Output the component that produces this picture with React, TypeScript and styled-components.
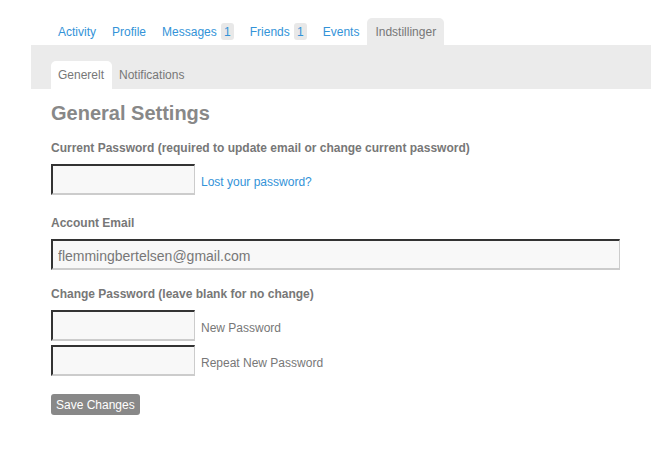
import { createGlobalStyle } from "styled-components";
import styled from "styled-components";

const GlobalStyle = createGlobalStyle`
  html, body {
    margin: 0;
    padding: 0;
    background: #fff;
    font-family: "Liberation Sans", Arial, sans-serif;
  }
`;

const Page = styled.div`
  width: 651px;
  height: 471px;
  padding-top: 18px;
  padding-left: 31px;
  box-sizing: border-box;
`;

const MainNav = styled.ul`
  display: flex;
  list-style: none;
  margin: 0;
  padding: 0 0 0 19px;
  height: 27px;
  align-items: stretch;
`;

const MainTab = styled.li<{ $active?: boolean }>`
  display: flex;
  align-items: center;
  padding: 0 8px;
  font-size: 12px;
  color: ${(p) => (p.$active ? "#777" : "#3393d8")};
  background: ${(p) => (p.$active ? "#ebebeb" : "transparent")};
  border-radius: 5px 5px 0 0;
`;

const Count = styled.span`
  display: inline-flex;
  align-items: center;
  justify-content: center;
  margin-left: 4px;
  width: 13px;
  height: 17px;
  font-size: 12px;
  background: #e8e8e8;
  color: #3393d8;
  border-radius: 3px;
`;

const SubBand = styled.div`
  background: #ebebeb;
  height: 44px;
  display: flex;
  align-items: flex-end;
  padding-left: 20px;
`;

const SubTab = styled.div<{ $active?: boolean }>`
  height: 28px;
  display: flex;
  align-items: center;
  padding: 0 8px 0 7px;
  font-size: 12px;
  color: #777;
  background: ${(p) => (p.$active ? "#fff" : "transparent")};
  border-radius: 5px 5px 0 0;
`;

const Content = styled.div`
  padding-left: 20px;
`;

const Heading = styled.h2`
  margin: 12px 0 0;
  font-size: 20px;
  line-height: 24px;
  font-weight: bold;
  color: #888;
`;

const Label = styled.div<{ $top: number }>`
  margin-top: ${(p) => p.$top}px;
  font-size: 12px;
  line-height: 14px;
  font-weight: bold;
  color: #777;
`;

const Row = styled.div<{ $top: number }>`
  display: flex;
  align-items: center;
  margin-top: ${(p) => p.$top}px;
`;

const Field = styled.input<{ $wide?: boolean }>`
  box-sizing: border-box;
  width: ${(p) => (p.$wide ? "569px" : "144px")};
  height: 31px;
  margin: 0;
  padding: 2px 0 0 5px;
  background: #f8f8f8;
  border-style: solid;
  border-width: 2px 1px 2px 2px;
  border-color: #333 #ccc #ccc #333;
  font-family: "Liberation Sans", Arial, sans-serif;
  font-size: 14px;
  color: #777;
  outline: none;
`;

const SideLink = styled.a`
  margin-left: 6px;
  font-size: 12px;
  color: #3393d8;
  text-decoration: none;
  padding-top: 4px;
`;

const SideText = styled.span`
  margin-left: 6px;
  font-size: 12px;
  color: #777;
  padding-top: 4px;
`;

const SaveButton = styled.button`
  margin-top: 18px;
  height: 21px;
  padding: 0 5px;
  border: none;
  border-radius: 3px;
  background: #888;
  color: #fff;
  font-family: "Liberation Sans", Arial, sans-serif;
  font-size: 12px;
`;

export default function App() {
  return (
    <>
      <GlobalStyle />
      <Page>
        <MainNav>
          <MainTab>Activity</MainTab>
          <MainTab>Profile</MainTab>
          <MainTab>
            Messages <Count>1</Count>
          </MainTab>
          <MainTab>
            Friends <Count>1</Count>
          </MainTab>
          <MainTab>Events</MainTab>
          <MainTab $active>Indstillinger</MainTab>
        </MainNav>
        <SubBand>
          <SubTab $active>Generelt</SubTab>
          <SubTab>Notifications</SubTab>
        </SubBand>
        <Content>
          <Heading>General Settings</Heading>
          <Label $top={16}>Current Password (required to update email or change current password)</Label>
          <Row $top={9}>
            <Field type="password" />
            <SideLink href="#">Lost your password?</SideLink>
          </Row>
          <Label $top={21}>Account Email</Label>
          <Row $top={9}>
            <Field $wide defaultValue="flemmingbertelsen@gmail.com" />
          </Row>
          <Label $top={17}>Change Password (leave blank for no change)</Label>
          <Row $top={9}>
            <Field type="password" />
            <SideText>New Password</SideText>
          </Row>
          <Row $top={4}>
            <Field type="password" />
            <SideText>Repeat New Password</SideText>
          </Row>
          <SaveButton>Save Changes</SaveButton>
        </Content>
      </Page>
    </>
  );
}
